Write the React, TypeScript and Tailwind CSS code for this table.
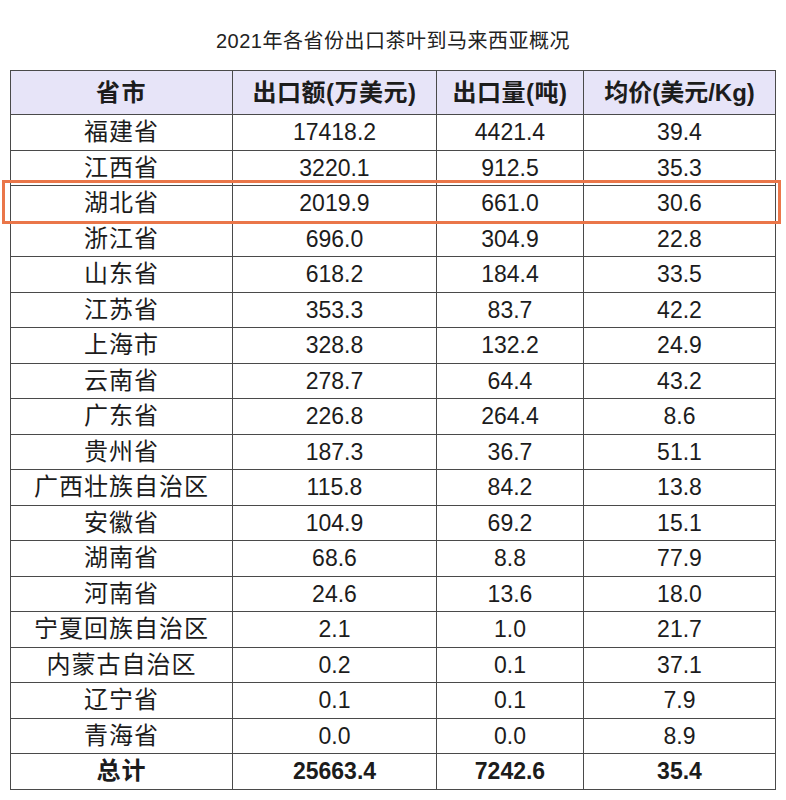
import React from "react";

type Row = { name: string; value: string; amount: string; price: string };

const rows: Row[] = [
  { name: "福建省", value: "17418.2", amount: "4421.4", price: "39.4" },
  { name: "江西省", value: "3220.1", amount: "912.5", price: "35.3" },
  { name: "湖北省", value: "2019.9", amount: "661.0", price: "30.6" },
  { name: "浙江省", value: "696.0", amount: "304.9", price: "22.8" },
  { name: "山东省", value: "618.2", amount: "184.4", price: "33.5" },
  { name: "江苏省", value: "353.3", amount: "83.7", price: "42.2" },
  { name: "上海市", value: "328.8", amount: "132.2", price: "24.9" },
  { name: "云南省", value: "278.7", amount: "64.4", price: "43.2" },
  { name: "广东省", value: "226.8", amount: "264.4", price: "8.6" },
  { name: "贵州省", value: "187.3", amount: "36.7", price: "51.1" },
  { name: "广西壮族自治区", value: "115.8", amount: "84.2", price: "13.8" },
  { name: "安徽省", value: "104.9", amount: "69.2", price: "15.1" },
  { name: "湖南省", value: "68.6", amount: "8.8", price: "77.9" },
  { name: "河南省", value: "24.6", amount: "13.6", price: "18.0" },
  { name: "宁夏回族自治区", value: "2.1", amount: "1.0", price: "21.7" },
  { name: "内蒙古自治区", value: "0.2", amount: "0.1", price: "37.1" },
  { name: "辽宁省", value: "0.1", amount: "0.1", price: "7.9" },
  { name: "青海省", value: "0.0", amount: "0.0", price: "8.9" },
];

const cell = "border-[1.5px] border-[#4a4a4a] text-center align-middle p-0 leading-[26px]";

const App: React.FC = () => {
  return (
    <div
      className="w-[786px] h-[800px] bg-white text-[#1c1c1c] overflow-hidden"
      style={{ fontFamily: '"Liberation Sans", "Noto Sans CJK SC", sans-serif' }}
    >
      <div className="h-[70px] pt-[26px] text-center text-[20px] leading-[30px] tracking-[0.5px] text-[#222]">
        2021年各省份出口茶叶到马来西亚概况
      </div>

      <div className="relative ml-[10px] w-[765px]">
        <table className="w-full border-collapse table-fixed">
          <colgroup>
            <col className="w-[222px]" />
            <col className="w-[204px]" />
            <col className="w-[147px]" />
            <col className="w-[192px]" />
          </colgroup>
          <thead>
            <tr className="h-[44px] bg-[#e7e4f8] text-[24px] font-bold">
              <th className={`${cell} tracking-[1.5px]`}>省市</th>
              <th className={`${cell} tracking-[0.5px]`}>出口额(万美元)</th>
              <th className={`${cell} tracking-[0.5px]`}>出口量(吨)</th>
              <th className={cell}>均价(美元/Kg)</th>
            </tr>
          </thead>
          <tbody className="text-[23px]">
            {rows.map(r => (
              <tr key={r.name} className="h-[35.5px]">
                <td className={`${cell} text-[24px] tracking-[1px]`}>{r.name}</td>
                <td className={cell}>{r.value}</td>
                <td className={cell}>{r.amount}</td>
                <td className={cell}>{r.price}</td>
              </tr>
            ))}
            <tr className="h-[35.5px] font-bold">
              <td className={`${cell} text-[24px] tracking-[1px]`}>总计</td>
              <td className={cell}>25663.4</td>
              <td className={cell}>7242.6</td>
              <td className={cell}>35.4</td>
            </tr>
          </tbody>
        </table>

        <div className="absolute left-[-8px] top-[110px] w-[779px] h-[44px] border-[3px] border-[#ea7649] pointer-events-none" />
      </div>
    </div>
  );
};

export default App;
